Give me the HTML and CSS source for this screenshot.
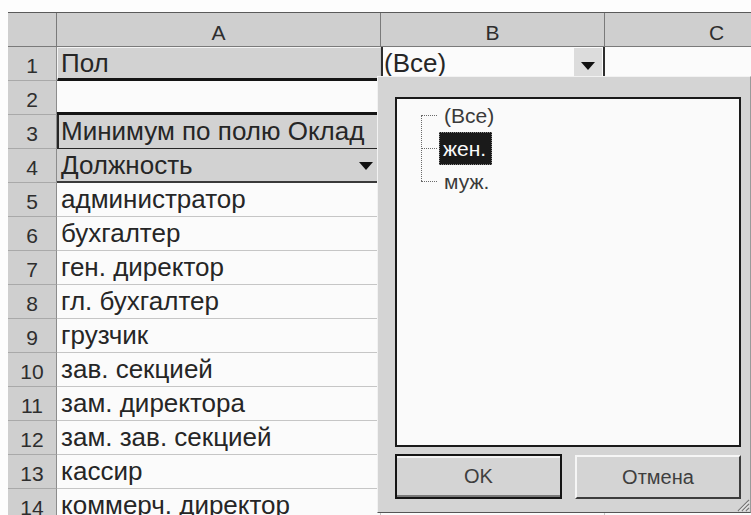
FILE: index.html
```html
<!DOCTYPE html>
<html lang="ru">
<head>
<meta charset="utf-8">
<title>Сводная таблица</title>
<link rel="stylesheet" href="styles.css">
</head>
<body>
<div class="page">
  <div class="sheet">
    <div class="corner"></div>
    <div class="colhead">A</div>
    <div class="colhead">B</div>
    <div class="colhead">C</div>

    <div class="rowhead">1</div>
    <div class="cell field rule-below lit">Пол</div>
    <div class="cell pagefield">(Все)<span class="dropbtn"><span class="tri"></span></span></div>
    <div class="cell"></div>

    <div class="rowhead">2</div>
    <div class="cell rule-below"></div>
    <div class="cell"></div>
    <div class="cell"></div>

    <div class="rowhead">3</div>
    <div class="cell field data-title">Минимум по полю Оклад</div>
    <div class="cell"></div>
    <div class="cell"></div>

    <div class="rowhead">4</div>
    <div class="cell field row-field">Должность<span class="tri"></span></div>
    <div class="cell"></div>
    <div class="cell"></div>

    <div class="rowhead">5</div><div class="cell">администратор</div><div class="cell"></div><div class="cell"></div>
    <div class="rowhead">6</div><div class="cell">бухгалтер</div><div class="cell"></div><div class="cell"></div>
    <div class="rowhead">7</div><div class="cell">ген. директор</div><div class="cell"></div><div class="cell"></div>
    <div class="rowhead">8</div><div class="cell">гл. бухгалтер</div><div class="cell"></div><div class="cell"></div>
    <div class="rowhead">9</div><div class="cell">грузчик</div><div class="cell"></div><div class="cell"></div>
    <div class="rowhead">10</div><div class="cell">зав. секцией</div><div class="cell"></div><div class="cell"></div>
    <div class="rowhead">11</div><div class="cell">зам. директора</div><div class="cell"></div><div class="cell"></div>
    <div class="rowhead">12</div><div class="cell">зам. зав. секцией</div><div class="cell"></div><div class="cell"></div>
    <div class="rowhead">13</div><div class="cell">кассир</div><div class="cell"></div><div class="cell"></div>
    <div class="rowhead">14</div><div class="cell">коммерч. директор</div><div class="cell"></div><div class="cell"></div>
  </div>

  <div class="popup">
    <div class="listbox">
      <ul class="tree">
        <li class="node"><span class="label">(Все)</span></li>
        <li class="node"><span class="label selected">жен.</span></li>
        <li class="node"><span class="label">муж.</span></li>
      </ul>
    </div>
    <div class="buttons">
      <button class="btn default">OK</button>
      <button class="btn">Отмена</button>
    </div>
    <svg class="grip" width="16" height="16" viewBox="0 0 16 16">
      <path d="M15 4 L4 15 M15 8 L8 15 M15 12 L12 15" stroke="#7a7a7a" stroke-width="1.2"/>
      <path d="M15 5.5 L5.5 15 M15 9.5 L9.5 15 M15 13.5 L13.5 15" stroke="#f4f4f4" stroke-width="1"/>
    </svg>
  </div>
</div>
</body>
</html>
```

FILE: styles.css
```css
html, body {
  margin: 0;
  background: #fdfdfd;
}

.page {
  position: relative;
  height: 515px;
  overflow: hidden;
  padding: 12px 0 0 8px;
  box-sizing: border-box;
  font-family: "Liberation Sans", Arial, sans-serif;
  color: #262626;
}

/* worksheet grid */
.sheet {
  display: grid;
  grid-template-columns: 49px 324px 224px 224px;
  grid-auto-rows: 34px;
  border-top: 1px solid #5a5a5a;
}

.sheet > div {
  box-sizing: border-box;
  white-space: nowrap;
  overflow: hidden;
}

.corner,
.colhead {
  background: #cfcfcf;
  border-right: 1px solid #7a7a7a;
  border-bottom: 1px solid #7a7a7a;
}

.colhead {
  font-size: 21px;
  line-height: 34px;
  text-align: center;
  padding-top: 3px;
  color: #2e2e2e;
}

.rowhead {
  background: #cfcfcf;
  border-right: 1px solid #8c8c8c;
  border-bottom: 1px solid #a9a9a9;
  font-size: 21px;
  line-height: 33px;
  text-align: center;
  padding-top: 2px;
  color: #2e2e2e;
}

.cell {
  position: relative;
  background: #fbfbfb;
  border-right: 1px solid #c6c6c6;
  border-bottom: 1px solid #c6c6c6;
  font-size: 26px;
  line-height: 33px;
  padding-left: 4px;
}

/* pivot table field buttons */
.field {
  background: #d2d2d2;
}

.lit {
  border-top: 1px solid #f4f4f4;
  border-left: 1px solid #f4f4f4;
  line-height: 31px;
  padding-left: 3px;
}

.rule-below {
  border-bottom: 3px solid #141414;
}

.data-title {
  border-left: 2px solid #262626;
  border-bottom: 1px solid #262626;
  padding-left: 2px;
}

.row-field {
  border-bottom: 2px solid #3a3a3a;
}

.pagefield {
  border-left: 2px solid #2e2e2e;
  border-right: 2px solid #2e2e2e;
  padding-left: 1px;
}

.tri {
  position: absolute;
  width: 0;
  height: 0;
  border-left: 7px solid transparent;
  border-right: 7px solid transparent;
  border-top: 8px solid #111;
}

.row-field .tri {
  right: 7px;
  top: 13px;
}

.dropbtn {
  position: absolute;
  right: 1px;
  top: 1px;
  width: 28px;
  height: 29px;
  background: #dcdcdc;
}

.dropbtn .tri {
  left: 7px;
  top: 14px;
}

/* page field drop-down */
.popup {
  position: absolute;
  left: 377px;
  top: 76px;
  width: 374px;
  height: 437px;
  box-sizing: border-box;
  background: #d4d4d4;
  border-top: 1px solid #f2f2f2;
  border-left: 1px solid #f2f2f2;
  border-right: 1px solid #9a9a9a;
  border-bottom: 1px solid #555;
  padding: 20px 9px 0 17px;
  display: flex;
  flex-direction: column;
}

.listbox {
  width: 346px;
  height: 350px;
  box-sizing: border-box;
  background: #fafafa;
  border: 2px solid #1a1a1a;
}

.tree {
  position: relative;
  list-style: none;
  margin: 0;
  padding: 0 0 0 24px;
  font-size: 21px;
}

.tree::before {
  content: "";
  position: absolute;
  left: 24px;
  top: 16px;
  height: 66px;
  border-left: 1px dotted #6a6a6a;
}

.node {
  display: flex;
  align-items: center;
  height: 33px;
}

.node::before {
  content: "";
  width: 16px;
  border-top: 1px dotted #6a6a6a;
}

.label {
  margin-left: 2px;
  padding: 3px 4px 3px 4px;
  line-height: 25px;
  color: #3a3a3a;
  border: 1px dotted transparent;
}

.selected {
  background: #1a1a1a;
  color: #fafafa;
  border-color: #8a8a8a;
  padding: 3px 5px 3px 3px;
}

.buttons {
  display: flex;
  gap: 13px;
  margin-top: 7px;
}

.btn {
  width: 167px;
  height: 45px;
  box-sizing: border-box;
  background: #d4d4d4;
  font-family: "Liberation Sans", Arial, sans-serif;
  font-size: 20px;
  color: #3e3e3e;
  border-top: 2px solid #f6f6f6;
  border-left: 2px solid #f6f6f6;
  border-right: 2px solid #3c3c3c;
  border-bottom: 2px solid #3c3c3c;
  padding: 0;
}

.btn + .btn {
  width: 166px;
  height: 44px;
  margin-top: 1px;
}

.default {
  border: 2px solid #141414;
  box-shadow: inset 0 2px 0 #f2f2f2, inset 0 -2px 0 #7a7a7a;
}

.grip {
  position: absolute;
  right: 0;
  bottom: 0;
}
```
